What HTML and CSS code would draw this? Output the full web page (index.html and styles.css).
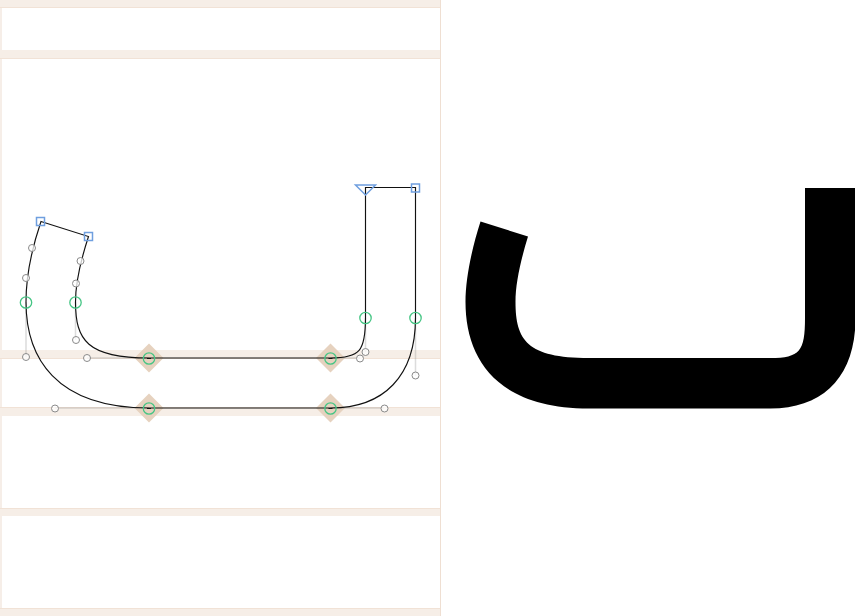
FILE: index.html
```html
<!DOCTYPE html>
<html lang="en">
<head>
<meta charset="utf-8">
<title>Glyph editor</title>
<link rel="stylesheet" href="styles.css">
</head>
<body>
<main class="stage">
  <section class="editor">
    <div class="metrics">
      <div class="band band-bottom"></div>
      <div class="gap gap-a"></div>
      <div class="band band-bottom band-tall"></div>
      <div class="gap gap-b"></div>
      <div class="band band-bottom band-tall"></div>
      <div class="gap gap-c"></div>
      <div class="band band-top band-tall"></div>
      <div class="gap gap-d"></div>
      <div class="band band-top"></div>
      <div class="gap gap-e"></div>
      <div class="band band-top"></div>
    </div>
    <svg class="overlay" width="441" height="616" viewBox="0 0 441 616">
      <g class="diamonds">
        <path d="M149 343.500 L163.500 358 L149 372.500 L134.500 358Z"/>
        <path d="M330.500 343.500 L345 358 L330.500 372.500 L316 358Z"/>
        <path d="M149 393.500 L163.500 408 L149 422.500 L134.500 408Z"/>
        <path d="M330.500 393.500 L345 408 L330.500 422.500 L316 408Z"/>
      </g>
      <g class="handles">
        <path d="M26 302V357M75.500 302V340M415.500 318V376M365.500 318V352"/>
        <path d="M55 408H149M384 408H330.500M87 358H149M360 358H330.500"/>
      </g>
      <path class="outline" d="M41 221.500 L88.500 236.500 C80.500 261 75.500 283.500 75.500 302 C75.500 340 87 358 149 358 L330.500 358 C360 358 365.500 351 365.500 318 L365.500 187.500 L415.500 187.500 L415.500 318 C415.500 376 384 408 330.500 408 L149 408 C55 408 26 357 26 302 C26 278 32 248 41 221.500Z"/>
      <g class="off">
        <circle cx="32" cy="248" r="3.500"/><circle cx="26" cy="278" r="3.500"/>
        <circle cx="26" cy="357" r="3.500"/><circle cx="55" cy="408.500" r="3.500"/>
        <circle cx="80.500" cy="261" r="3.500"/><circle cx="76" cy="283.500" r="3.500"/>
        <circle cx="76" cy="340" r="3.500"/><circle cx="87" cy="358" r="3.500"/>
        <circle cx="360" cy="358.500" r="3.500"/><circle cx="365.500" cy="352" r="3.500"/>
        <circle cx="384.500" cy="408.500" r="3.500"/><circle cx="415.500" cy="375.500" r="3.500"/>
      </g>
      <g class="on">
        <circle cx="26" cy="302.500" r="5.700"/><circle cx="75.500" cy="302.500" r="5.700"/>
        <circle cx="365.500" cy="318" r="5.700"/><circle cx="415.500" cy="318" r="5.700"/>
        <circle cx="149" cy="358.500" r="5.700"/><circle cx="330.500" cy="358.500" r="5.700"/>
        <circle cx="149" cy="408.500" r="5.700"/><circle cx="330.500" cy="408.500" r="5.700"/>
      </g>
      <g class="ticks">
        <path d="M147 358.500H151M328.500 358.500H332.500M147 408.500H151M328.500 408.500H332.500"/>
      </g>
      <g class="starts">
        <rect x="36.500" y="217.500" width="8" height="8"/>
        <rect x="84.500" y="232.500" width="8" height="8"/>
        <rect x="411.500" y="184" width="8" height="8"/>
        <path d="M355.500 185 H375.500 L365.500 195Z"/>
      </g>
    </svg>
  </section>
  <section class="preview">
    <svg class="glyph" width="414" height="616" viewBox="441 0 414 616">
      <path transform="translate(440)" d="M40.500 221.500 L88 236.500 C80.500 261 75.500 283.500 75.500 302 C75.500 340 87 358 149 358 L330.500 358 C360 358 365 351 365 318 L365 188 L415.500 188 L415.500 318 C415.500 376 384 408.500 330.500 408.500 L149 408.500 C55 408.500 25.500 357 25.500 302 C25.500 278 32 248 40.500 221.500Z"/>
    </svg>
  </section>
</main>
</body>
</html>
```
FILE: styles.css
```css
html, body {
  margin: 0;
  padding: 0;
  background: #ffffff;
}

body {
  width: 855px;
  height: 616px;
  overflow: hidden;
}

.stage {
  display: flex;
  width: 855px;
  height: 616px;
}

.editor {
  position: relative;
  flex: 0 0 441px;
  height: 616px;
}

.preview {
  flex: 0 0 414px;
}

.metrics {
  display: flex;
  flex-direction: column;
  height: 616px;
  box-sizing: border-box;
  border-left: 2px solid #f6eee8;
  border-right: 1px solid #efdfd2;
}

.band {
  flex: 0 0 8px;
  margin-left: -2px;
  box-sizing: border-box;
  background: #f6eee7;
}

.band-tall {
  flex-basis: 9px;
}

.band-bottom {
  border-bottom: 1px solid #f1e2d6;
}

.band-top {
  border-top: 1px solid #f1e2d6;
}

.gap-a { flex: 0 0 42px; }
.gap-b { flex: 0 0 291px; }
.gap-c { flex: 0 0 48px; }
.gap-d { flex: 0 0 92px; }
.gap-e { flex: 0 0 92px; }

.overlay {
  position: absolute;
  top: 0;
  left: 0;
  display: block;
}

.diamonds path {
  fill: #e6d2bf;
}

.handles path {
  fill: none;
  stroke: #8c8c8c;
  stroke-opacity: 0.3;
  stroke-width: 1.500;
}

.outline {
  fill: none;
  stroke: #111111;
  stroke-width: 1.150;
}

.off circle {
  fill: #ffffff;
  fill-opacity: 0.75;
  stroke: #8a8a8a;
  stroke-width: 1;
}

.on circle {
  fill: none;
  stroke: #45c584;
  stroke-width: 1.300;
}

.ticks path {
  fill: none;
  stroke: #111111;
  stroke-width: 1;
}

.starts rect,
.starts path {
  fill: none;
  stroke: #6f9fdf;
  stroke-width: 1.500;
}

.glyph {
  display: block;
}

.glyph path {
  fill: #000000;
}
```
